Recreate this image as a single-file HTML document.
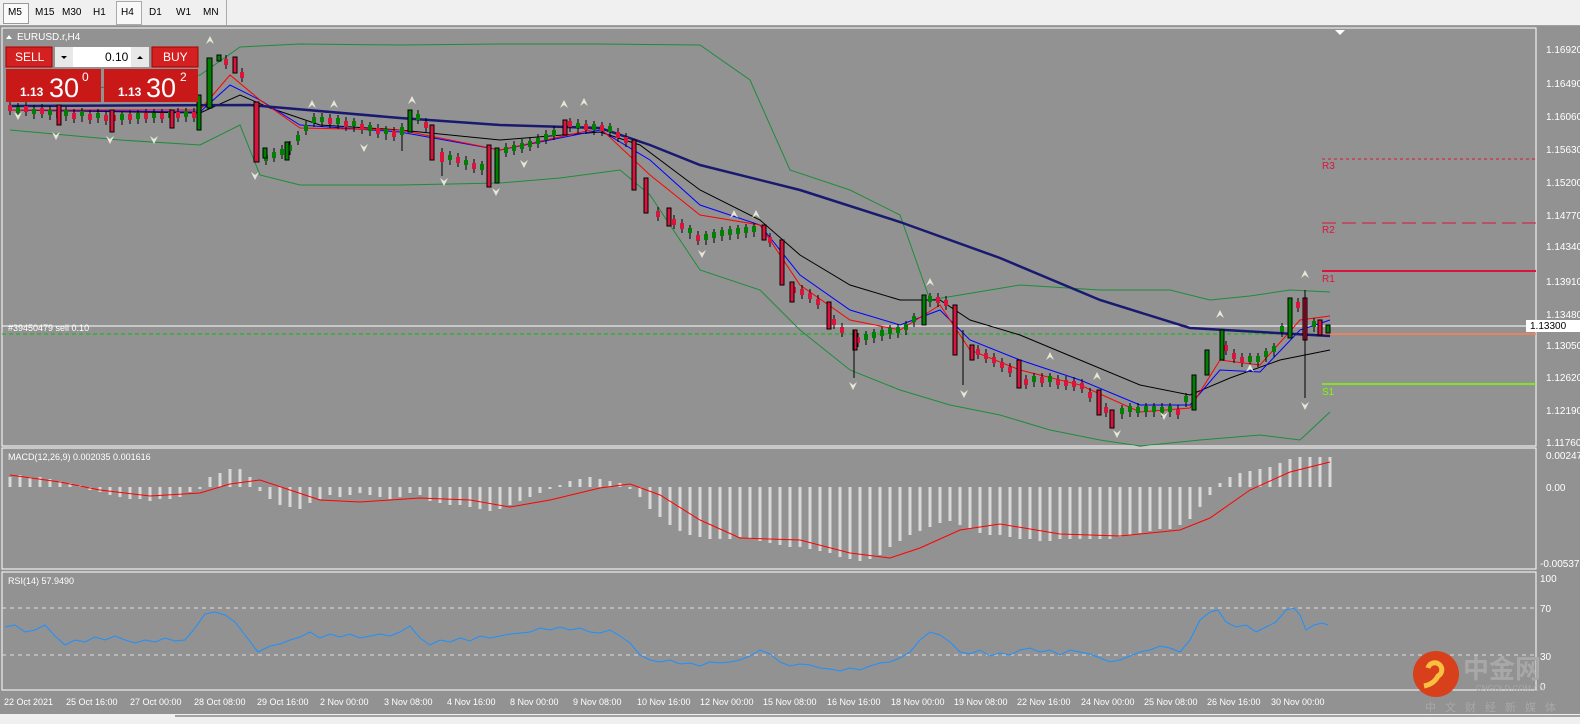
<!DOCTYPE html>
<html><head><meta charset="utf-8"><style>
body{margin:0;width:1580px;height:724px;background:#f0f0f0;font-family:"Liberation Sans",sans-serif;overflow:hidden;position:relative}
.tb{position:absolute;top:0;left:0;width:1580px;height:25px;background:#f0f0f0;border-bottom:1px solid #a0a0a0}
.tb span{position:absolute;top:7px;font-size:10px;color:#000}
svg{position:absolute;left:0;top:0}
.t{font-size:10px;fill:#fff;font-family:"Liberation Sans",sans-serif}
</style></head><body>
<div class="tb">
<div style="position:absolute;left:3px;top:3px;width:24px;height:19px;border:1px solid #999;background:#fafafa"></div>
<span style="left:8px">M5</span><span style="left:35px">M15</span><span style="left:62px">M30</span><span style="left:93px">H1</span>
<div style="position:absolute;left:116px;top:1px;width:24px;height:22px;border:1px solid #aaa;background:#f8f8f8"></div>
<span style="left:121px">H4</span><span style="left:149px">D1</span><span style="left:176px">W1</span><span style="left:203px">MN</span>
<div style="position:absolute;left:226px;top:0;width:1px;height:25px;background:#aaa"></div>
</div>
<svg width="1580" height="724" viewBox="0 0 1580 724">
<rect x="0" y="26" width="1580" height="690" fill="#929292"/>
<rect x="2" y="28" width="1534" height="418" fill="none" stroke="#fff" stroke-width="1"/>
<rect x="2" y="448" width="1534" height="121" fill="none" stroke="#fff"/>
<rect x="2" y="572" width="1534" height="118" fill="none" stroke="#fff"/>
<rect x="0" y="714" width="1580" height="10" fill="#f0f0f0"/>
<line x1="175" y1="716" x2="1580" y2="716" stroke="#555"/>
<!-- price levels -->
<line x1="1322" y1="159" x2="1536" y2="159" stroke="#dc143c" stroke-dasharray="3,3"/>
<text x="1322" y="169" class="t" style="fill:#dc143c">R3</text>
<line x1="1322" y1="223" x2="1536" y2="223" stroke="#dc143c" stroke-dasharray="14,6"/>
<text x="1322" y="233" class="t" style="fill:#dc143c">R2</text>
<line x1="1322" y1="271" x2="1536" y2="271" stroke="#dc143c" stroke-width="2"/>
<text x="1322" y="282" class="t" style="fill:#dc143c">R1</text>
<line x1="1322" y1="334" x2="1536" y2="334" stroke="#ff7f50" stroke-width="1.5"/>
<line x1="1322" y1="384" x2="1536" y2="384" stroke="#7cfc00" stroke-width="1.5"/>
<text x="1322" y="395" class="t" style="fill:#7cfc00">S1</text>
<line x1="2" y1="326" x2="1536" y2="326" stroke="#fff"/>
<line x1="2" y1="334" x2="1322" y2="334" stroke="#00c000" stroke-dasharray="4,3"/>
<text x="8" y="331" class="t" style="font-size:9px">#39450479 sell 0.10</text>
<!-- bollinger -->
<polyline fill="none" stroke="#1e8c3c" points="10,100 120,85 200,75 240,47 300,44 400,45 500,44 600,44 700,45 750,80 790,170 850,190 900,215 930,300 960,295 1020,285 1100,290 1170,290 1210,300 1250,296 1290,290 1330,292"/>
<polyline fill="none" stroke="#1e8c3c" points="10,130 120,140 200,145 240,125 260,175 300,185 400,185 500,183 560,178 620,170 650,195 700,270 760,290 800,330 850,370 900,390 950,405 1000,415 1050,430 1100,440 1140,446 1200,440 1260,435 1300,440 1330,412"/>
<!-- MAs -->
<polyline fill="none" stroke="#000" points="10,110 200,113 240,95 270,108 320,125 400,130 500,140 600,132 640,145 700,190 760,220 800,255 850,285 900,300 940,300 970,320 1020,335 1080,360 1140,385 1190,395 1230,378 1280,360 1330,350"/>
<polyline fill="none" stroke="#0000ff" points="10,110 200,112 230,85 260,100 300,125 400,132 500,150 600,130 650,160 700,205 760,225 800,275 850,310 900,325 940,310 970,340 1020,360 1080,380 1140,405 1190,405 1220,370 1260,372 1300,330 1330,320"/>
<polyline fill="none" stroke="#ff0000" points="10,110 200,110 230,75 260,100 300,128 400,130 500,150 600,128 650,175 700,215 760,225 800,285 850,320 900,330 940,305 970,350 1020,370 1080,385 1140,412 1190,408 1220,360 1260,365 1300,320 1330,316"/>
<polyline fill="none" stroke="#191970" stroke-width="2.5" points="10,106 250,105 400,118 500,125 600,128 650,145 700,165 800,190 900,222 1000,258 1100,300 1190,328 1330,336"/>
<!-- dense small candles -->
<path fill="none" stroke="#000" stroke-width="1" d="M10,101v14M18,103v14M26,102v14M34,105v14M42,104v14M50,106v14M58,108v14M66,107v14M74,109v14M82,108v14M90,110v14M98,109v14M106,111v14M114,111v14M122,111v14M130,110v14M138,110v14M146,109v14M154,109v14M162,109v14M170,109v14M178,108v14M186,108v14M194,108v14M226,55v14M242,68v14M266,151v14M274,148v14M282,145v14M290,141v14M298,131v14M306,121v14M314,113v14M322,113v14M330,114v14M338,115v14M346,117v14M354,118v14M362,120v14M370,122v14M378,124v14M386,126v14M394,127v14M402,123v28M418,110v14M426,118v14M442,148v28M450,151v14M458,153v14M466,156v14M474,159v14M482,161v14M506,143v14M514,141v14M522,139v14M530,137v14M538,134v14M546,130v14M554,126v14M570,118v14M578,119v14M586,120v14M594,121v14M602,122v14M610,123v14M618,128v14M626,133v14M658,207v14M674,215v14M682,219v14M690,225v14M698,231v14M706,231v14M714,229v14M722,227v14M730,226v14M738,225v14M746,224v14M754,223v14M770,233v14M794,283v14M802,285v14M810,289v14M818,295v14M834,315v14M842,323v14M858,333v14M866,331v14M874,329v14M882,327v14M890,325v14M898,324v14M906,321v14M914,313v14M930,293v14M938,293v14M946,296v14M978,345v14M986,349v14M994,353v14M1002,358v14M1010,363v14M1026,375v14M1034,373v14M1042,373v14M1050,373v14M1058,375v14M1066,376v14M1074,377v14M1082,379v14M1090,388v14M1106,403v14M1122,405v14M1130,403v14M1138,403v14M1146,403v14M1154,403v14M1162,403v14M1170,403v14M1178,405v14M1186,393v14M1226,341v14M1234,349v14M1242,353v14M1250,353v14M1258,353v14M1266,348v14M1274,343v14M1282,323v14M1298,298v14M1314,318v14"/>
<path fill="none" stroke="#008000" stroke-width="4" d="M18,107v6M34,109v5M50,110v5M66,110v6M82,111v5M98,113v5M122,114v6M138,113v6M154,113v5M170,112v6M186,111v6M266,155v6M274,152v6M282,149v6M290,145v6M298,135v6M306,125v6M314,117v6M322,117v5M338,118v6M354,121v5M370,125v6M386,129v5M402,127v8M418,114v6M450,155v5M466,160v5M482,164v6M506,147v6M514,145v6M522,143v6M530,141v6M538,138v6M546,134v6M554,130v6M578,123v5M594,124v6M610,126v6M690,228v5M706,234v6M714,232v6M722,230v6M730,229v6M738,228v6M746,227v6M754,226v6M866,334v6M874,332v6M882,330v6M890,328v6M898,327v6M906,324v6M914,316v6M930,296v6M1034,376v6M1050,376v6M1122,408v6M1130,406v6M1138,407v6M1146,406v6M1154,406v6M1162,407v6M1170,406v6M1186,396v6M1250,356v6M1258,356v6M1266,351v6M1274,346v6M1282,326v6M1314,321v6"/>
<path fill="none" stroke="#dc143c" stroke-width="4" d="M10,105v6M26,106v6M42,108v6M58,112v6M74,113v6M90,114v6M106,115v6M114,115v6M130,114v6M146,113v6M162,113v6M178,112v6M194,112v6M226,59v6M242,72v6M330,118v6M346,121v6M362,124v6M378,128v6M394,131v6M426,122v6M442,152v10M458,157v6M474,163v6M570,121v6M586,124v6M602,125v6M618,132v6M626,137v6M658,211v6M674,219v6M682,223v6M698,235v6M770,237v6M794,287v6M802,289v6M810,293v6M818,299v6M834,319v6M842,327v6M858,337v6M938,297v6M946,300v6M978,349v6M986,353v6M994,357v6M1002,362v6M1010,367v6M1026,379v6M1042,377v6M1058,379v6M1066,380v6M1074,381v6M1082,383v6M1090,392v6M1106,407v6M1178,409v6M1226,345v6M1234,353v6M1242,357v6M1298,302v6"/>
<g stroke="#000" stroke-width="1">
<rect x="207" y="58" width="5" height="50" fill="#008000"/><rect x="217" y="55" width="4" height="6" fill="#008000"/><rect x="233" y="57" width="4" height="16" fill="#dc143c"/>
<rect x="254" y="102" width="5" height="60" fill="#dc143c"/><rect x="263" y="148" width="4" height="10" fill="#008000"/><rect x="285" y="142" width="4" height="18" fill="#008000"/>
<rect x="57" y="105" width="4" height="20" fill="#dc143c"/><rect x="110" y="110" width="4" height="22" fill="#dc143c"/><rect x="170" y="110" width="4" height="18" fill="#dc143c"/><rect x="197" y="95" width="4" height="35" fill="#008000"/>
<rect x="408" y="110" width="4" height="22" fill="#008000"/><rect x="430" y="125" width="4" height="35" fill="#dc143c"/><rect x="487" y="145" width="4" height="42" fill="#dc143c"/><rect x="495" y="148" width="4" height="35" fill="#008000"/>
<rect x="563" y="120" width="4" height="15" fill="#dc143c"/><rect x="632" y="140" width="4" height="50" fill="#dc143c"/><rect x="644" y="178" width="4" height="35" fill="#dc143c"/>
<rect x="667" y="208" width="4" height="18" fill="#dc143c"/><rect x="762" y="225" width="4" height="15" fill="#dc143c"/><rect x="780" y="240" width="4" height="45" fill="#dc143c"/>
<rect x="790" y="282" width="4" height="20" fill="#dc143c"/><rect x="827" y="302" width="4" height="27" fill="#dc143c"/><rect x="853" y="330" width="4" height="20" fill="#dc143c"/>
<rect x="922" y="295" width="4" height="30" fill="#008000"/><rect x="953" y="305" width="4" height="50" fill="#dc143c"/><rect x="970" y="345" width="4" height="15" fill="#dc143c"/>
<rect x="1017" y="360" width="4" height="28" fill="#dc143c"/><rect x="1097" y="390" width="4" height="25" fill="#dc143c"/><rect x="1110" y="410" width="4" height="18" fill="#dc143c"/>
<rect x="1192" y="375" width="4" height="35" fill="#008000"/><rect x="1205" y="350" width="4" height="25" fill="#008000"/><rect x="1220" y="330" width="4" height="30" fill="#008000"/>
<rect x="1288" y="298" width="4" height="40" fill="#008000"/><rect x="1303" y="298" width="4" height="42" fill="#dc143c"/><rect x="1318" y="320" width="4" height="15" fill="#dc143c"/><rect x="1326" y="325" width="4" height="8" fill="#008000"/>
<line x1="1305" y1="290" x2="1305" y2="398"/><line x1="854" y1="330" x2="854" y2="378"/><line x1="963" y1="330" x2="963" y2="385"/>
</g>
<!-- fractals -->
<g fill="#e8e8d8">
<path d="M206,44 l4,-8 4,8 -4,-3z"/><path d="M14,112 l4,8 4,-8 -4,3z"/><path d="M1301,278 l4,-8 4,8 -4,-3z"/><path d="M1301,402 l4,8 4,-8 -4,3z"/><path d="M926,286 l4,-8 4,8 -4,-3z"/><path d="M849,382 l4,8 4,-8 -4,3z"/><path d="M1113,430 l4,8 4,-8 -4,3z"/><path d="M1216,318 l4,-8 4,8 -4,-3z"/><path d="M251,172 l4,8 4,-8 -4,3z"/><path d="M492,188 l4,8 4,-8 -4,3z"/><path d="M730,218 l4,-8 4,8 -4,-3z"/><path d="M580,106 l4,-8 4,8 -4,-3z"/><path d="M960,390 l4,8 4,-8 -4,3z"/>
<path d="M52,132 l4,8 4,-8 -4,3z"/><path d="M106,136 l4,8 4,-8 -4,3z"/><path d="M150,136 l4,8 4,-8 -4,3z"/><path d="M308,108 l4,-8 4,8 -4,-3z"/><path d="M330,108 l4,-8 4,8 -4,-3z"/><path d="M360,144 l4,8 4,-8 -4,3z"/><path d="M408,104 l4,-8 4,8 -4,-3z"/><path d="M440,178 l4,8 4,-8 -4,3z"/><path d="M520,160 l4,8 4,-8 -4,3z"/><path d="M560,108 l4,-8 4,8 -4,-3z"/><path d="M698,250 l4,8 4,-8 -4,3z"/><path d="M752,218 l4,-8 4,8 -4,-3z"/><path d="M1046,360 l4,-8 4,8 -4,-3z"/><path d="M1093,380 l4,-8 4,8 -4,-3z"/><path d="M1160,412 l4,8 4,-8 -4,3z"/><path d="M1246,372 l4,-8 4,8 -4,-3z"/>
</g>
<path d="M1335,30 l5,5 5,-5z" fill="#fff"/>
<!-- price axis -->
<g class="t"><text x="1546" y="53">1.16920</text><text x="1546" y="87">1.16490</text><text x="1546" y="120">1.16060</text><text x="1546" y="153">1.15630</text><text x="1546" y="186">1.15200</text><text x="1546" y="219">1.14770</text><text x="1546" y="250">1.14340</text><text x="1546" y="285">1.13910</text><text x="1546" y="318">1.13480</text><text x="1546" y="349">1.13050</text><text x="1546" y="381">1.12620</text><text x="1546" y="414">1.12190</text><text x="1546" y="446">1.11760</text>
<text x="1546" y="459">0.002471</text><text x="1546" y="491">0.00</text><text x="1540" y="567">-0.005379</text>
<text x="1540" y="582">100</text><text x="1540" y="612">70</text><text x="1540" y="660">30</text><text x="1540" y="690">0</text></g>
<rect x="1526" y="320" width="54" height="12" fill="#fff"/><text x="1530" y="329" style="font-size:10px;fill:#000">1.13300</text>
<!-- MACD -->
<g stroke="#d8d8d8" stroke-width="3">
<path d="M10,487v-10M20,487v-12M30,487v-10M40,487v-10M50,487v-8M60,487v-6M70,487v-4M80,487v-2M90,487v3M100,487v5M110,487v8M120,487v10M130,487v12M140,487v12M150,487v14M160,487v12M170,487v12M180,487v10M190,487v5M200,487v2M210,487v-10M220,487v-14M230,487v-18M240,487v-18M250,487v-10M260,487v4M270,487v12M280,487v18M290,487v20M300,487v22M310,487v16M320,487v12M330,487v8M340,487v10M350,487v8M360,487v6M370,487v8M380,487v10M390,487v12M400,487v10M410,487v6M420,487v8M430,487v14M440,487v16M450,487v18M460,487v18M470,487v20M480,487v22M490,487v24M500,487v22M510,487v18M520,487v14M530,487v10M540,487v6M550,487v2M560,487v-2M570,487v-6M580,487v-8M590,487v-10M600,487v-8M610,487v-6M620,487v-4M630,487v2M640,487v10M650,487v22M660,487v30M670,487v38M680,487v44M690,487v48M700,487v50M710,487v52M720,487v52M730,487v52M740,487v50M750,487v52M760,487v54M770,487v56M780,487v58M790,487v60M800,487v60M810,487v62M820,487v64M830,487v66M840,487v70M850,487v72M860,487v74M870,487v72M880,487v68M890,487v60M900,487v54M910,487v48M920,487v44M930,487v40M940,487v36M950,487v34M960,487v38M970,487v42M980,487v46M990,487v48M1000,487v48M1010,487v50M1020,487v52M1030,487v52M1040,487v54M1050,487v54M1060,487v52M1070,487v52M1080,487v52M1090,487v52M1100,487v52M1110,487v52M1120,487v50M1130,487v48M1140,487v46M1150,487v44M1160,487v42M1170,487v42M1180,487v38M1190,487v32M1200,487v20M1210,487v8M1220,487v-4M1230,487v-10M1240,487v-14M1250,487v-16M1260,487v-18M1270,487v-20M1280,487v-24M1290,487v-28M1300,487v-30M1310,487v-30M1320,487v-30M1330,487v-30"/>
</g>
<polyline fill="none" stroke="#ff0000" points="10,475 60,482 100,490 150,496 200,493 230,484 260,480 290,490 320,500 360,502 420,498 470,500 510,507 550,500 600,488 630,484 660,495 700,520 740,538 800,540 850,553 890,558 920,548 960,530 1000,524 1060,534 1120,536 1180,530 1210,518 1250,490 1290,472 1330,462"/>
<text x="8" y="460" class="t" style="font-size:9px">MACD(12,26,9) 0.002035 0.001616</text>
<!-- RSI -->
<line x1="2" y1="608" x2="1536" y2="608" stroke="#ddd" stroke-dasharray="4,4"/>
<line x1="2" y1="655" x2="1536" y2="655" stroke="#ddd" stroke-dasharray="4,4"/>
<text x="8" y="584" class="t" style="font-size:9px">RSI(14) 57.9490</text>
<polyline fill="none" stroke="#1e90ff" points="5,627 15,625 25,632 35,630 45,625 55,636 65,645 75,640 85,642 95,637 105,640 115,636 125,640 135,643 145,640 155,642 165,638 175,641 185,640 195,628 205,614 215,612 225,615 235,622 245,635 258,652 270,646 280,644 290,640 300,637 310,632 320,638 330,634 340,637 350,634 360,638 370,636 380,634 390,636 400,632 410,626 420,638 430,645 440,640 450,642 460,638 470,641 480,636 490,638 500,636 510,634 520,633 530,632 540,628 550,630 560,627 570,630 580,628 590,632 600,633 610,630 620,636 630,643 640,655 650,660 660,662 670,660 680,664 690,663 700,666 710,662 720,663 730,662 740,660 750,656 760,650 770,654 780,662 790,666 800,664 810,665 820,668 830,669 840,671 850,668 860,670 870,666 880,663 890,662 900,658 910,652 920,640 930,632 940,635 950,642 960,652 970,654 980,650 990,656 1000,653 1010,655 1020,650 1030,648 1040,652 1050,650 1060,655 1070,650 1080,652 1090,654 1100,658 1110,662 1120,660 1130,656 1140,652 1150,650 1160,646 1170,648 1180,652 1190,640 1200,620 1210,612 1218,610 1226,622 1236,627 1246,625 1256,632 1266,627 1276,622 1286,610 1294,608 1300,615 1306,630 1314,625 1322,623 1328,625"/>
<!-- time axis -->
<g class="t" style="font-size:9px"><text x="4" y="705">22 Oct 2021</text><text x="66" y="705">25 Oct 16:00</text><text x="130" y="705">27 Oct 00:00</text><text x="194" y="705">28 Oct 08:00</text><text x="257" y="705">29 Oct 16:00</text><text x="320" y="705">2 Nov 00:00</text><text x="384" y="705">3 Nov 08:00</text><text x="447" y="705">4 Nov 16:00</text><text x="510" y="705">8 Nov 00:00</text><text x="573" y="705">9 Nov 08:00</text><text x="637" y="705">10 Nov 16:00</text><text x="700" y="705">12 Nov 00:00</text><text x="763" y="705">15 Nov 08:00</text><text x="827" y="705">16 Nov 16:00</text><text x="891" y="705">18 Nov 00:00</text><text x="954" y="705">19 Nov 08:00</text><text x="1017" y="705">22 Nov 16:00</text><text x="1081" y="705">24 Nov 00:00</text><text x="1144" y="705">25 Nov 08:00</text><text x="1207" y="705">26 Nov 16:00</text><text x="1271" y="705">30 Nov 00:00</text></g>
<!-- logo -->
<circle cx="1436" cy="674" r="23" fill="#d8401c"/>
<path d="M1428,668 a7,7 0 1 1 10,8 q-4,8 -14,10" fill="none" stroke="#f8c040" stroke-width="5"/>
<text x="1463" y="678" style="font-size:26px;fill:#a8a8a8;font-weight:bold;font-family:'Noto Sans CJK SC',sans-serif">中金网</text>
<text x="1476" y="691" style="font-size:8px;fill:#a8a8a8">CNGOLD.COM.CN</text>
<text x="1425" y="711" style="font-size:11px;fill:#a8a8a8;letter-spacing:9px;font-family:'Noto Sans CJK SC',sans-serif">中文财经新媒体</text>
<!-- title & trade panel -->
<path d="M6,39 l3,-4 3,4z" fill="#fff"/><text x="17" y="40" class="t">EURUSD.r,H4</text>
<rect x="6" y="47" width="46" height="20" fill="#d42020" stroke="#a00"/><text x="15" y="61" class="t" style="font-size:12px">SELL</text>
<rect x="55" y="47" width="18" height="20" fill="#e8e8e8"/><path d="M61,56 l3,3 3,-3z" fill="#000"/>
<rect x="73" y="47" width="58" height="20" fill="#fff"/><text x="105" y="61" style="font-size:12px;fill:#000">0.10</text>
<rect x="131" y="47" width="18" height="20" fill="#e8e8e8"/><path d="M137,59 l3,-3 3,3z" fill="#000"/>
<rect x="152" y="47" width="46" height="20" fill="#d42020" stroke="#a00"/><text x="163" y="61" class="t" style="font-size:12px">BUY</text>
<rect x="6" y="69" width="95" height="33" fill="#c81818"/><rect x="104" y="69" width="94" height="33" fill="#c81818"/>
<text x="20" y="96" class="t" style="font-size:12px;font-weight:bold">1.13</text><text x="49" y="97" class="t" style="font-size:27px">30</text><text x="82" y="81" class="t" style="font-size:12px">0</text>
<text x="118" y="96" class="t" style="font-size:12px;font-weight:bold">1.13</text><text x="146" y="97" class="t" style="font-size:27px">30</text><text x="180" y="81" class="t" style="font-size:12px">2</text>
</svg>
</body></html>
